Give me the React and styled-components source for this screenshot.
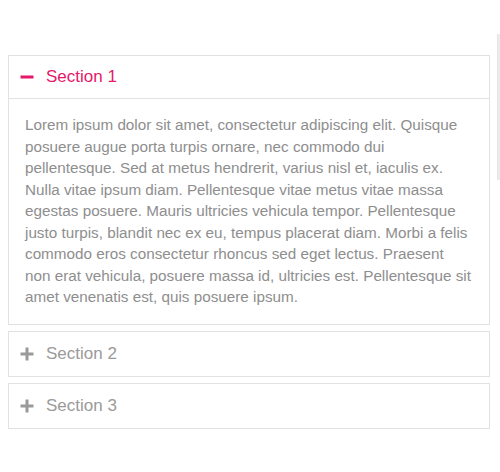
import React, { useState } from 'react';
import styled, { createGlobalStyle } from 'styled-components';

const GlobalStyle = createGlobalStyle`
  body {
    margin: 8px;
    background: #ffffff;
    font-family: "Liberation Sans", Arial, sans-serif;
  }
`;

const Page = styled.div`
  padding-top: 47px;
  width: 482px;
`;

const Accordion = styled.div`
  display: flex;
  flex-direction: column;
  gap: 6px;
`;

const Panel = styled.div`
  border: 1px solid #e2e2e2;
  background: #ffffff;
`;

const Header = styled.div`
  display: flex;
  align-items: center;
  gap: 12px;
  height: ${props => (props.open ? '42px' : '44px')};
  padding: 0 11px;
  cursor: pointer;
  font-family: Arial, "Liberation Sans", sans-serif;
  font-size: 17px;
  color: ${props => (props.open ? '#e5186a' : '#9a9a9a')};
`;

const Icon = styled.svg`
  width: 14px;
  height: 14px;
  flex-shrink: 0;
`;

const Body = styled.div`
  border-top: 1px solid #e2e2e2;
  padding: 15px 17px 16px 16px;
  font-family: Arial, "Liberation Sans", sans-serif;
  font-size: 15.25px;
  line-height: 21.5px;
  color: #8e8e8e;
`;

const ScrollThumb = styled.div`
  position: fixed;
  top: 34px;
  right: 0;
  width: 2px;
  height: 146px;
  background: #ececec;
  border-left: 1px solid #e4e4e4;
  border-radius: 1px 0 0 1px;
`;

const text =
  'Lorem ipsum dolor sit amet, consectetur adipiscing elit. Quisque posuere augue porta turpis ornare, nec commodo dui pellentesque. Sed at metus hendrerit, varius nisl et, iaculis ex. Nulla vitae ipsum diam. Pellentesque vitae metus vitae massa egestas posuere. Mauris ultricies vehicula tempor. Pellentesque justo turpis, blandit nec ex eu, tempus placerat diam. Morbi a felis commodo eros consectetur rhoncus sed eget lectus. Praesent non erat vehicula, posuere massa id, ultricies est. Pellentesque sit amet venenatis est, quis posuere ipsum.';

const sections = ['Section 1', 'Section 2', 'Section 3'];

function ToggleIcon({ open }) {
  const color = open ? '#e5186a' : '#9a9a9a';
  return (
    <Icon viewBox="0 0 14 14">
      <rect x="0.5" y="5.5" width="13" height="3" fill={color} />
      {!open && <rect x="5.5" y="0.5" width="3" height="13" fill={color} />}
    </Icon>
  );
}

export default function App() {
  const [openIndex, setOpenIndex] = useState(0);

  return (
    <Page>
      <GlobalStyle />
      <Accordion>
        {sections.map((title, i) => {
          const open = openIndex === i;
          return (
            <Panel key={title}>
              <Header open={open} onClick={() => setOpenIndex(open ? -1 : i)}>
                <ToggleIcon open={open} />
                {title}
              </Header>
              {open && <Body>{text}</Body>}
            </Panel>
          );
        })}
      </Accordion>
      <ScrollThumb />
    </Page>
  );
}
